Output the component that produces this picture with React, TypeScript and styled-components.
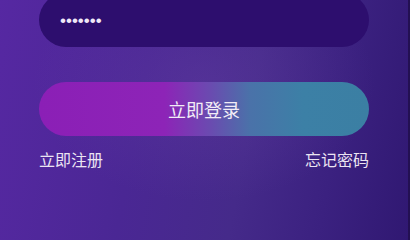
import React from "react";
import styled, {createGlobalStyle} from "styled-components";

const GlobalStyle = createGlobalStyle`
  html, body {
    margin: 0;
    padding: 0;
    height: 100%;
    background: #241050;
  }
  #root {
    height: 100%;
  }
  body {
    font-family: "Noto Sans CJK SC", "Noto Sans", sans-serif;
  }
`;

const Page = styled.div`
  display: flex;
  width: 100%;
  height: 100vh;
  overflow: hidden;
`;

const Backdrop = styled.div`
  flex: 1;
  height: 100%;
  background:
    radial-gradient(ellipse 60% 70% at 50% 35%, rgba(110, 70, 170, 0.3), rgba(110, 70, 170, 0) 70%),
    linear-gradient(100deg, #5628a2 0%, #4a2794 35%, #452a8a 60%, #3b2180 80%, #301872 100%);
`;

const Form = styled.div`
  display: flex;
  flex-direction: column;
  margin: -7px 39px 0 39px;
`;

const Field = styled.div`
  display: flex;
  align-items: center;
  height: 54px;
  border-radius: 27px;
  background: #2d0e6e;
  padding: 0 21px;
`;

const PasswordText = styled.span`
  color: #efe8f7;
  font-family: "Liberation Sans", sans-serif;
  font-size: 17px;
  line-height: 1;
`;

const LoginButton = styled.button`
  margin-top: 35px;
  height: 54px;
  border: none;
  border-radius: 27px;
  background: linear-gradient(90deg, #8b1fb6 0%, #8d24b7 38%, #6a4bb0 52%, #4a72a9 64%, #3c80a6 80%, #3b7fa3 100%);
  color: #f2ecf6;
  font-family: "Noto Sans CJK SC", sans-serif;
  font-size: 18px;
  padding: 0;
  cursor: pointer;
`;

const LinkRow = styled.div`
  display: flex;
  justify-content: space-between;
  margin-top: 12px;
`;

const TextLink = styled.a`
  color: #ebe4f2;
  font-size: 16px;
  line-height: 22px;
  text-decoration: none;
`;

const EdgeStrip = styled.div`
  width: 2px;
  height: 100%;
  background: #231052;
`;

function App() {
    return (
        <Page>
            <GlobalStyle/>
            <Backdrop>
                <Form>
                    <Field>
                        <PasswordText>{"\u2022\u2022\u2022\u2022\u2022\u2022\u2022"}</PasswordText>
                    </Field>
                    <LoginButton>立即登录</LoginButton>
                    <LinkRow>
                        <TextLink>立即注册</TextLink>
                        <TextLink>忘记密码</TextLink>
                    </LinkRow>
                </Form>
            </Backdrop>
            <EdgeStrip/>
        </Page>
    );
}

export default App;
